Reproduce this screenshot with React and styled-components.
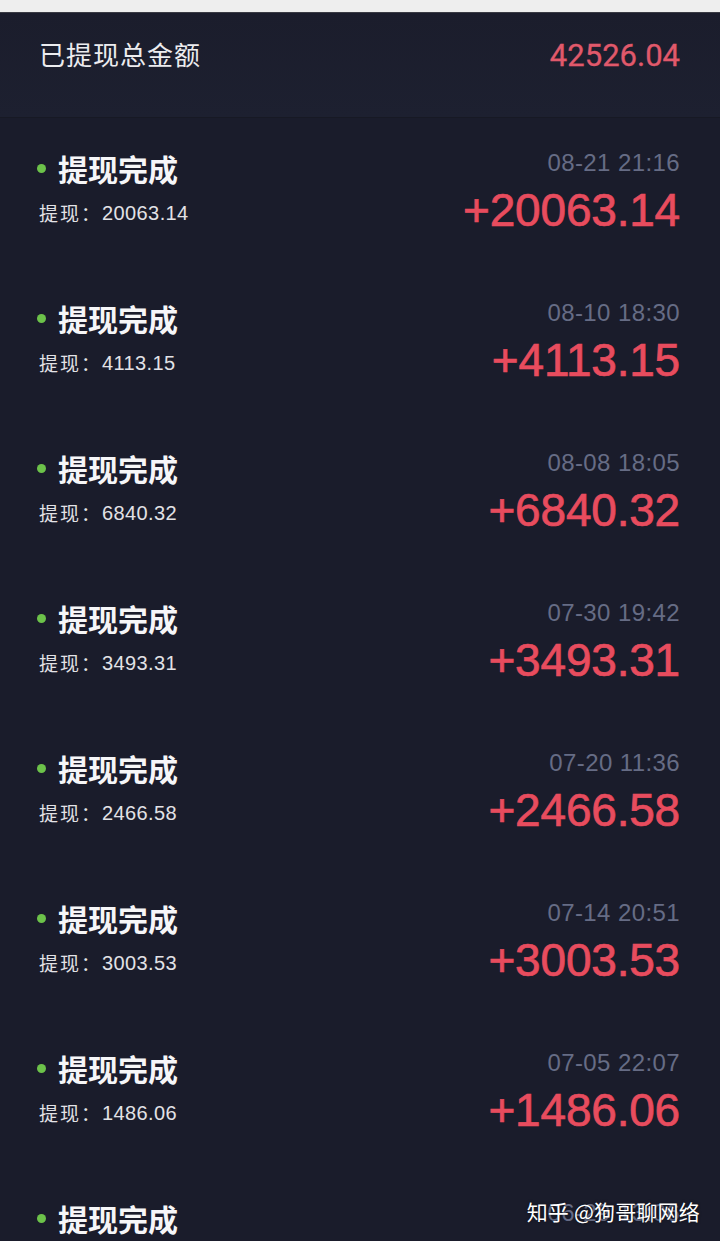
import React from "react";
import styled, { createGlobalStyle } from "styled-components";

const Global = createGlobalStyle`
  html, body { margin: 0; padding: 0; overflow: hidden; background: #1a1c2b; }
  * { box-sizing: border-box; }
`;

const Page = styled.div`
  position: relative;
  width: 720px;
  height: 1241px;
  overflow: hidden;
  background: #1a1c2b;
  font-family: "Liberation Sans", "Noto Sans CJK SC", sans-serif;
`;

const TopStrip = styled.div`
  height: 13px;
  background: #eeeeee;
  border-bottom: 1px solid #3a3b44;
`;

const Header = styled.div`
  height: 105px;
  display: flex;
  justify-content: space-between;
  align-items: flex-start;
  padding: 23px 40px 0 39px;
  background: linear-gradient(#1b1d2c, #1d2030);
  border-bottom: 1px solid #171924;
`;

const HeaderLabel = styled.div`
  font-family: "Noto Sans CJK SC", sans-serif;
  font-size: 26px;
  line-height: 36px;
  color: #ececef;
  letter-spacing: 1px;
`;

const HeaderTotal = styled.div`
  font-family: Roboto, "Liberation Sans", sans-serif;
  font-size: 31px;
  line-height: 36px;
  color: #e0596b;
  margin-top: 2px;
  -webkit-text-stroke: 0.3px #e0596b;
`;

const List = styled.div`
  display: flex;
  flex-direction: column;
`;

const Row = styled.div`
  height: 150px;
  flex-shrink: 0;
  display: flex;
  justify-content: space-between;
  padding: 0 40px 0 37px;
`;

const Left = styled.div`
  display: flex;
  flex-direction: column;
  padding-top: 32px;
`;

const Title = styled.div`
  display: flex;
  align-items: center;
  height: 36px;
  font-family: "Noto Sans CJK SC", sans-serif;
  font-weight: 700;
  font-size: 30px;
  color: #f6f6f8;
`;

const Dot = styled.span`
  width: 9px;
  height: 9px;
  border-radius: 50%;
  background: #6cc24a;
  margin: 0 12px 0 0;
`;

const Sub = styled.div`
  margin-top: 15px;
  margin-left: 2px;
  height: 24px;
  line-height: 24px;
  color: #e2e2e6;
  display: flex;
`;

const SubLabel = styled.span`
  font-family: "Noto Sans CJK SC", sans-serif;
  font-size: 19px;
  letter-spacing: 2px;
`;

const SubValue = styled.span`
  font-family: "Liberation Sans", sans-serif;
  font-size: 20px;
  letter-spacing: 0.4px;
`;

const Right = styled.div`
  display: flex;
  flex-direction: column;
  align-items: flex-end;
  padding-top: 32px;
`;

const DateText = styled.div`
  height: 26px;
  line-height: 26px;
  font-size: 24px;
  color: #666c85;
  letter-spacing: 0.4px;
`;

const Amount = styled.div`
  margin-top: 10px;
  height: 48px;
  line-height: 48px;
  font-size: 46px;
  color: #e84c5e;
  letter-spacing: -0.2px;
  -webkit-text-stroke: 0.7px #e84c5e;
`;

const Watermark = styled.div`
  position: absolute;
  right: 20px;
  top: 1197px;
  font-family: "Noto Sans CJK SC", sans-serif;
  font-size: 21px;
  line-height: 28px;
  color: #ffffff;
  text-shadow: 0 0 3px rgba(0, 0, 0, 0.6);
  letter-spacing: 0.2px;
`;

const rows = [
  { date: "08-21 21:16", amt: "20063.14" },
  { date: "08-10 18:30", amt: "4113.15" },
  { date: "08-08 18:05", amt: "6840.32" },
  { date: "07-30 19:42", amt: "3493.31" },
  { date: "07-20 11:36", amt: "2466.58" },
  { date: "07-14 20:51", amt: "3003.53" },
  { date: "07-05 22:07", amt: "1486.06" },
  { date: "06-29 13:06", amt: "1060.03" },
];

export default function App() {
  return (
    <Page>
      <Global />
      <TopStrip />
      <Header>
        <HeaderLabel>已提现总金额</HeaderLabel>
        <HeaderTotal>42526.04</HeaderTotal>
      </Header>
      <List>
        {rows.map((r, i) => (
          <Row key={i}>
            <Left>
              <Title>
                <Dot />
                提现完成
              </Title>
              <Sub>
                <SubLabel>提现：</SubLabel>
                <SubValue>{r.amt}</SubValue>
              </Sub>
            </Left>
            <Right>
              <DateText>{r.date}</DateText>
              <Amount>+{r.amt}</Amount>
            </Right>
          </Row>
        ))}
      </List>
      <Watermark>知乎 @狗哥聊网络</Watermark>
    </Page>
  );
}
